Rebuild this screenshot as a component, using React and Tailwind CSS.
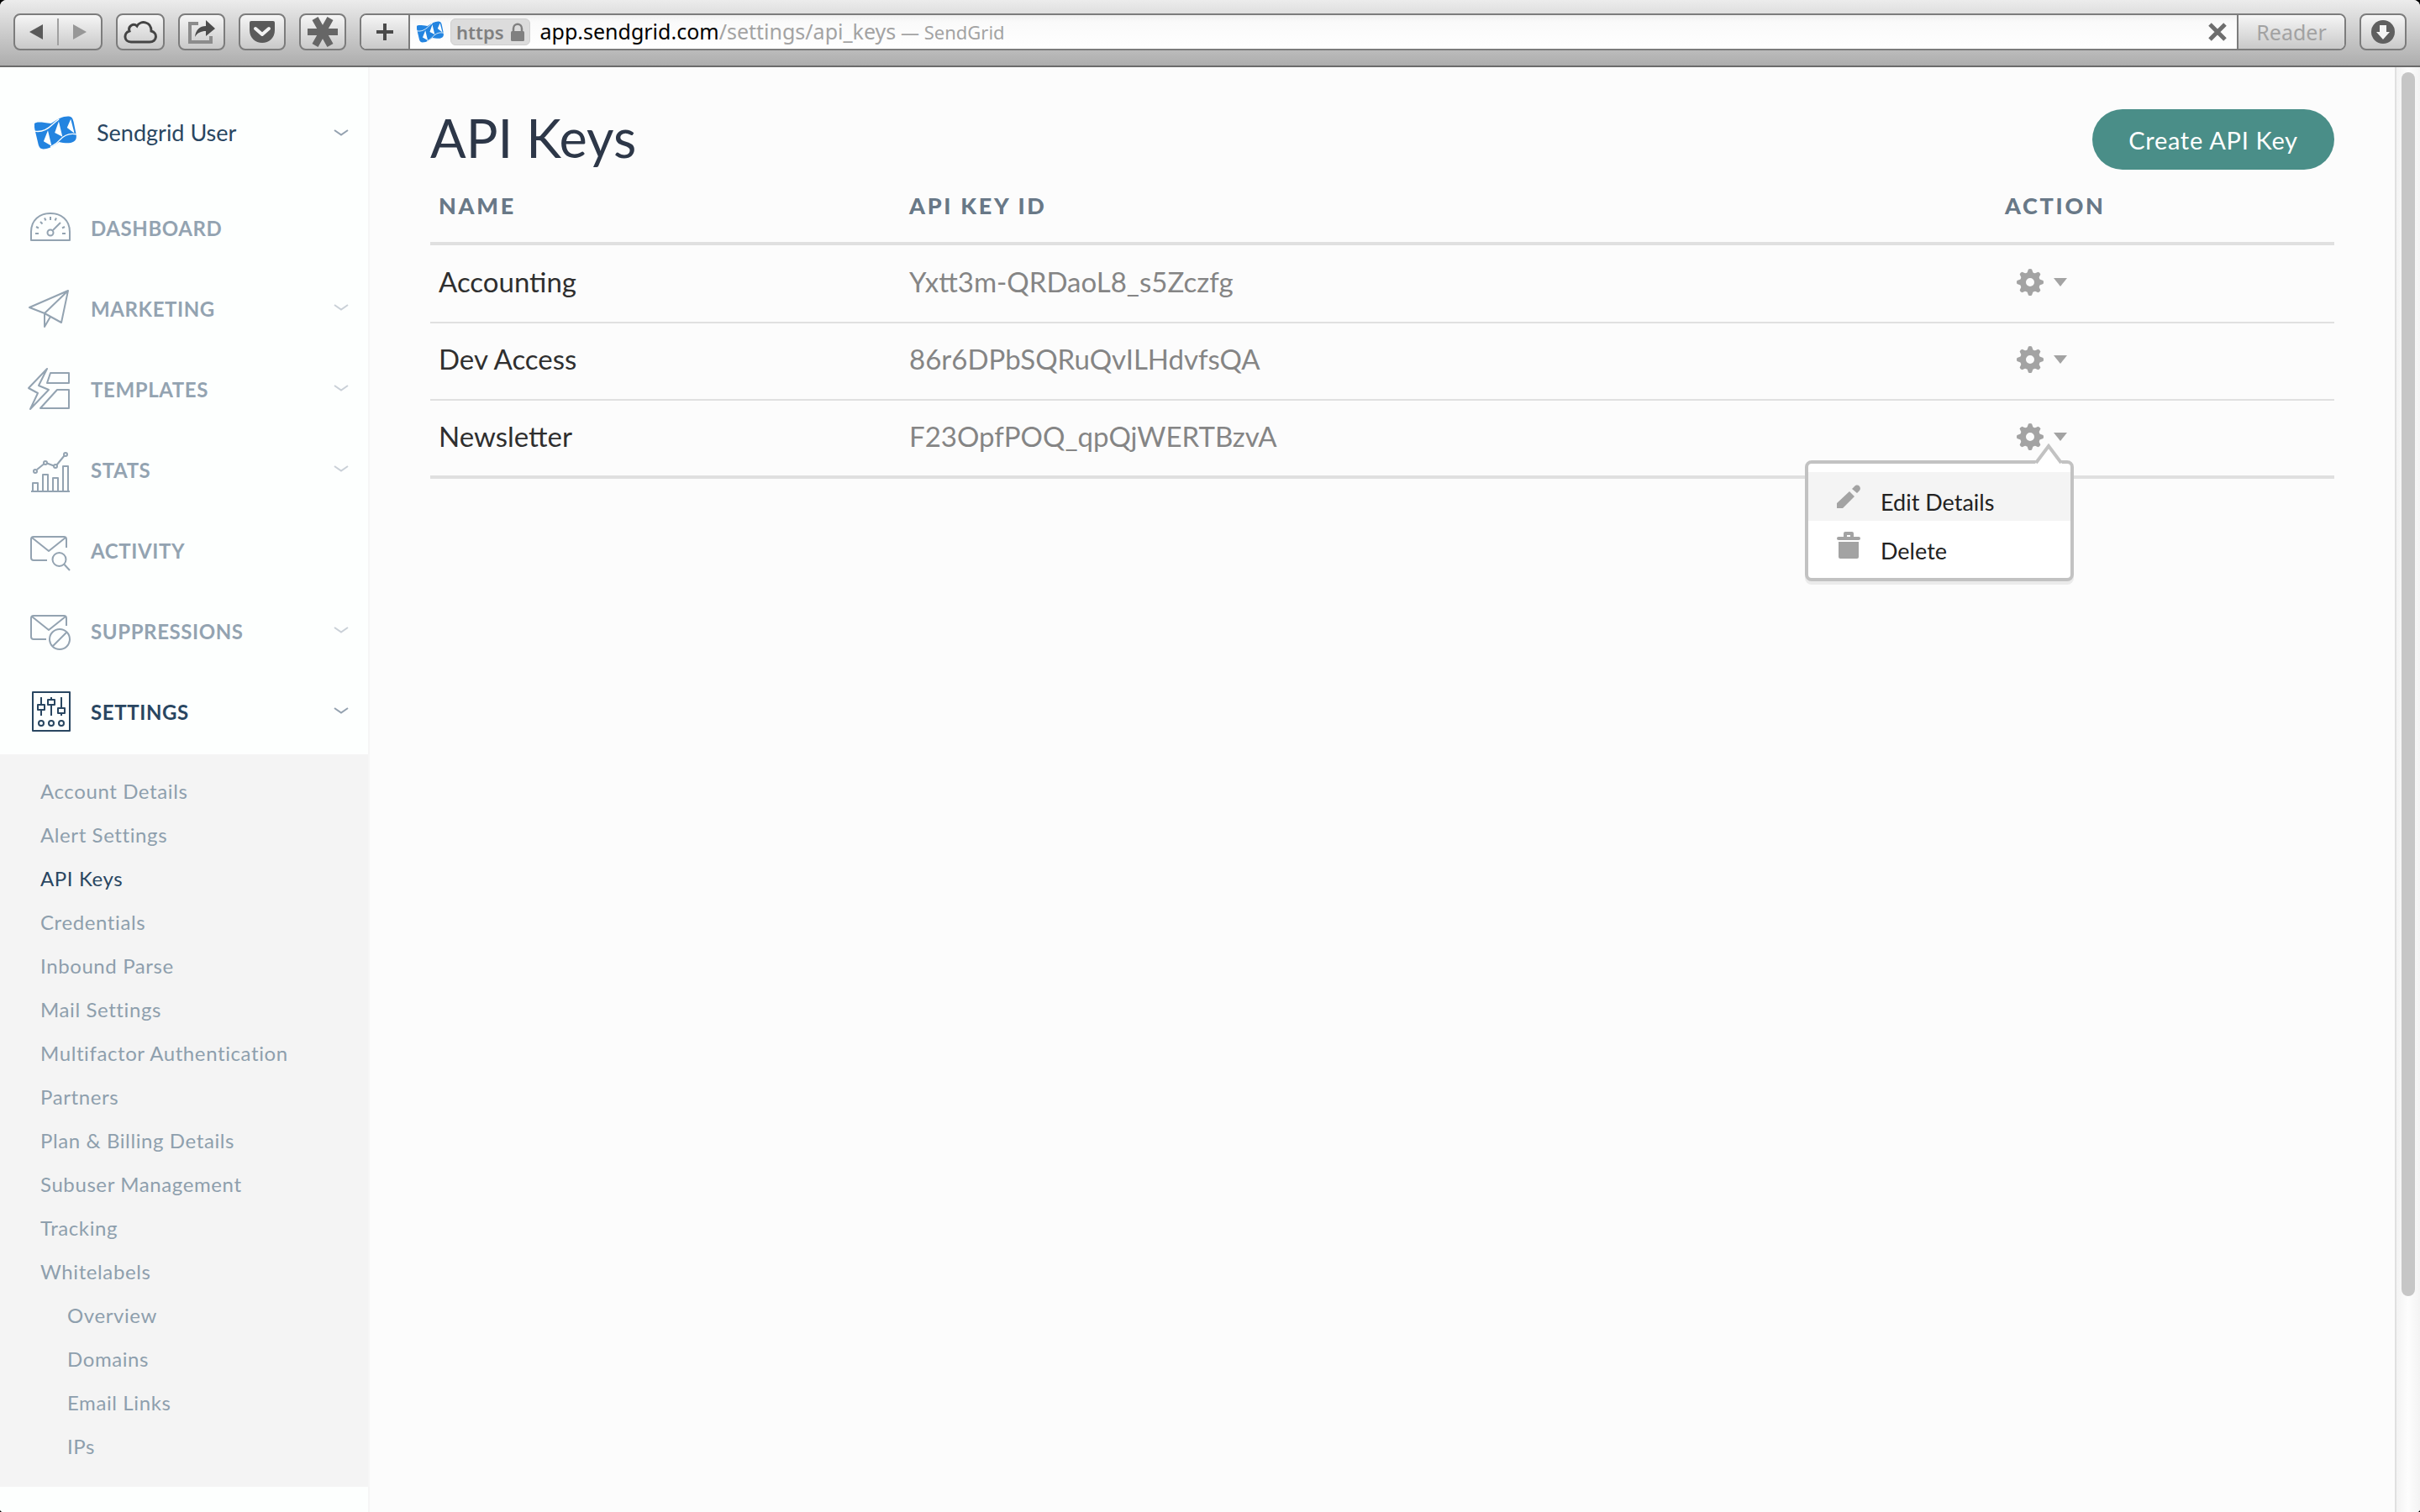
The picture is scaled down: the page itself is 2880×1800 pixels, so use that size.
import React from "react";

const TOOL_BTN =
  "flex h-11 items-center justify-center rounded-lg border-2 border-[#7c7c7c] bg-linear-to-b from-[#f6f6f6] to-[#c9c9c9]";

function Logo({ className }) {
  return (
    <svg viewBox="0 0 147 116" className={className} aria-hidden="true">
      <path
        d="M0 26 C4 20 22 19 58 26 C82 10 100 0 120 1 C132 2 134 10 137 20 L146 64 C148 78 146 92 120 94 C104 94 94 92 86 90 C66 104 52 115 30 115 C18 114 15 106 12 92 L2 50 C0 42 -1 34 0 26 Z"
        fill="#2384e0"
      />
      <path d="M-2 52 C26 58 46 46 62 30 C72 22 78 16 86 10" fill="none" stroke="#fdfffe" strokeWidth="4" />
      <path d="M149 64 C124 58 104 66 88 84 C78 96 66 102 56 108" fill="none" stroke="#fdfffe" strokeWidth="4" />
      <path d="M47 50 L60 104 L32 88 Z M85 18 L98 72 L71 58 Z M127 10 L140 60 L114 40 Z" fill="#fdfffe" />
    </svg>
  );
}

function Chevron({ strong }) {
  return (
    <svg viewBox="0 0 18 10" className={"h-[10px] w-[18px] " + (strong ? "text-[#93a1af]" : "text-[#c9d0d7]")} fill="none" stroke="currentColor" strokeWidth="2" aria-hidden="true">
      <path d="M1 2 L9 7.500 L17 2" />
    </svg>
  );
}

function NavIcon({ children }) {
  return (
    <svg viewBox="0 0 56 56" className="h-14 w-14 shrink-0" fill="none" stroke="currentColor" strokeWidth="2" strokeLinejoin="round" aria-hidden="true">
      {children}
    </svg>
  );
}

const ICONS = {
  dashboard: (
    <>
      <path d="M5 42 V32 C5 18 15 10 28 10 C41 10 51 18 51 32 V42 Z" />
      <circle cx="28" cy="33" r="3.5" />
      <path d="M31 30 L40 21 M10 34 H14 M42 34 H46 M11 26 L14 27.500 M16 20 L18.500 22.500 M21 15.500 L22.500 18.500 M28 14 V18 M35 15.500 L33.500 18.500 M45 26 L42 27.500" />
    </>
  ),
  marketing: (
    <path d="M3 26 L49 6 L41 44 L21 33 Z M49 6 L21 33 V49 L28 37" />
  ),
  templates: (
    <>
      <path d="M24 3 L2 26 L13 32 L4 51 L26 28 L14 23 Z" />
      <path d="M28 8 H50 V20 H24 Z M36 28 H50 V50 H16 Z" />
    </>
  ),
  stats: (
    <>
      <path d="M5 53 H51 M7 53 V43 H13 V53 M19 53 V33 H25 V53 M31 53 V37 H37 V53 M43 53 V23 H49 V53" />
      <circle cx="10" cy="29" r="2" />
      <circle cx="22" cy="19" r="2" />
      <circle cx="34" cy="23" r="2" />
      <circle cx="46" cy="9" r="2" />
      <path d="M12 27 L20 20.500 M24 19.500 L32 22.500 M35.500 21.500 L44.500 10.500" />
    </>
  ),
  activity: (
    <>
      <path d="M24 39 H8 Q5 39 5 36 V14 Q5 11 8 11 H44 Q47 11 47 14 V24 M6 12 L26 28 L46 12" />
      <circle cx="38.500" cy="38" r="8" />
      <path d="M44.500 44 L51 51" />
    </>
  ),
  suppressions: (
    <>
      <path d="M23 37 H8 Q5 37 5 34 V12 Q5 9 8 9 H44 Q47 9 47 12 V21 M6 10 L26 26 L46 10" />
      <circle cx="39" cy="37" r="12" />
      <path d="M31 45 L47 29" />
    </>
  ),
  settings: (
    <>
      <path d="M7 4 H51 V50 H7 Z M17 10 V19 M17 25 V32 M29 10 V13 M29 19 V32 M41 10 V23 M41 29 V32 M13 19 H21 V25 H13 Z M25 13 H33 V19 H25 Z M37 23 H45 V29 H37 Z" />
      <circle cx="17" cy="41" r="3" />
      <circle cx="29" cy="41" r="3" />
      <circle cx="41" cy="41" r="3" />
    </>
  ),
};

const NAV = [
  { id: "dashboard", label: "DASHBOARD" },
  { id: "marketing", label: "MARKETING", menu: true },
  { id: "templates", label: "TEMPLATES", menu: true },
  { id: "stats", label: "STATS", menu: true },
  { id: "activity", label: "ACTIVITY" },
  { id: "suppressions", label: "SUPPRESSIONS", menu: true },
  { id: "settings", label: "SETTINGS", menu: true, active: true },
];

const SUBNAV = [
  "Account Details",
  "Alert Settings",
  "API Keys",
  "Credentials",
  "Inbound Parse",
  "Mail Settings",
  "Multifactor Authentication",
  "Partners",
  "Plan & Billing Details",
  "Subuser Management",
  "Tracking",
  "Whitelabels",
];

const WHITELABELS = ["Overview", "Domains", "Email Links", "IPs"];

const KEYS = [
  { name: "Accounting", id: "Yxtt3m-QRDaoL8_s5Zczfg" },
  { name: "Dev Access", id: "86r6DPbSQRuQvILHdvfsQA" },
  { name: "Newsletter", id: "F23OpfPOQ_qpQjWERTBzvA", open: true },
];

function Toolbar() {
  return (
    <header className="flex h-20 shrink-0 items-start border-b-2 border-[#6b6b6b] bg-linear-to-b from-[#ececec] to-[#adadad] px-4 pt-4 font-['Noto_Sans',sans-serif]">
      <div className={TOOL_BTN + " w-[106px]"}>
        <button type="button" aria-label="Back" className="flex h-full flex-1 items-center justify-center">
          <svg viewBox="0 0 18 18" className="h-[18px] w-[18px]"><path d="M17 0 V18 L1 9 Z" fill="#5a5a5a" /></svg>
        </button>
        <span className="h-8 w-0.5 bg-[#a0a0a0]" />
        <button type="button" aria-label="Forward" className="flex h-full flex-1 items-center justify-center">
          <svg viewBox="0 0 18 18" className="h-[18px] w-[18px]"><path d="M1 0 V18 L17 9 Z" fill="#979797" /></svg>
        </button>
      </div>
      <button type="button" aria-label="iCloud tabs" className={TOOL_BTN + " ml-4 w-[58px]"}>
        <svg viewBox="0 0 40 28" className="h-7 w-10" fill="none" stroke="#444" strokeWidth="3">
          <path d="M9 26 C0 26 0 15 7 13 C5 7 12 3 16 7 C20 0 33 1 33 13 C41 15 40 26 31 26 Z" />
        </svg>
      </button>
      <button type="button" aria-label="Share" className={TOOL_BTN + " ml-4 w-14"}>
        <svg viewBox="0 0 34 32" className="h-8 w-[34px]">
          <path d="M13 6 H3 V28 H28 V21" fill="none" stroke="#8c8c8c" strokeWidth="4" />
          <path d="M9 22 C10 13 15 9 22 9 V2 L33 12 L22 21 V15 C16 15 12 17 9 22 Z" fill="#4c4c4c" />
        </svg>
      </button>
      <button type="button" aria-label="Save to Pocket" className={TOOL_BTN + " ml-4 w-14"}>
        <svg viewBox="0 0 30 26" className="h-[26px] w-[30px]">
          <path d="M2 0 H28 Q30 0 30 2 V11 C30 20 23 26 15 26 C7 26 0 20 0 11 V2 Q0 0 2 0 Z" fill="#5a5a5a" />
          <path d="M7 9 L15 16 L23 9" fill="none" stroke="#f2f2f2" strokeWidth="4" strokeLinecap="round" strokeLinejoin="round" />
        </svg>
      </button>
      <button type="button" aria-label="LastPass" className={TOOL_BTN + " ml-4 w-14"}>
        <svg viewBox="0 0 36 36" className="h-9 w-9" stroke="#666" strokeWidth="8">
          <path d="M0 18 H36 M9 2 L27 34 M27 2 L9 34" />
        </svg>
      </button>
      <div className="ml-4 flex h-11 min-w-0 flex-1 overflow-hidden rounded-lg border-2 border-[#7c7c7c] bg-white">
        <button type="button" aria-label="New bookmark" className="flex w-[58px] items-center justify-center border-r-2 border-[#7c7c7c] bg-linear-to-b from-[#f6f6f6] to-[#c9c9c9]">
          <svg viewBox="0 0 20 20" className="h-5 w-5" stroke="#4a4a4a" strokeWidth="4"><path d="M0 10 H20 M10 0 V20" /></svg>
        </button>
        <div className="flex min-w-0 flex-1 items-center bg-linear-to-b from-[#f0f0f0] via-[#fafafa] via-20% to-white pr-3 pl-2">
          <Logo className="h-7 w-8" />
          <span className="ml-2 flex h-8 items-center gap-2 rounded-md border border-[#cfcfcf] bg-[#dcdcdc] px-1.5 text-[22px] font-semibold text-[#808080]">
            https
            <svg viewBox="0 0 16 22" className="h-[22px] w-4">
              <path d="M3 11 V7 C3 0 13 0 13 7 V11" fill="none" stroke="#808080" strokeWidth="2.500" />
              <rect x="0" y="10" width="16" height="12" rx="1.500" fill="#808080" />
            </svg>
          </span>
          <p className="ml-3 truncate text-[25px] text-[#a3a3a3]">
            <span className="text-black">app.sendgrid.com</span>
            <span>/settings/api_keys</span>
            <span className="text-[22px]"> — SendGrid</span>
          </p>
          <button type="button" aria-label="Stop loading" className="ml-auto">
            <svg viewBox="0 0 22 22" className="h-[22px] w-[22px]" stroke="#6e6e6e" strokeWidth="5"><path d="M2 2 L20 20 M20 2 L2 20" /></svg>
          </button>
        </div>
        <button type="button" className="w-32 border-l-2 border-[#7c7c7c] bg-linear-to-b from-[#f6f6f6] to-[#c9c9c9] text-[25px] leading-10 text-[#a2a2a2]">
          Reader
        </button>
      </div>
      <button type="button" aria-label="Downloads" className={TOOL_BTN + " ml-4 w-14"}>
        <svg viewBox="0 0 28 28" className="h-7 w-7">
          <circle cx="14" cy="14" r="14" fill="#5f5f5f" />
          <path d="M10 6 H18 V14 H22 L14 23 L6 14 H10 Z" fill="#f4f4f4" />
        </svg>
      </button>
    </header>
  );
}

function Sidebar() {
  return (
    <nav className="w-110 shrink-0 border-r-2 border-[#f6f6f6] bg-[#fdfffe]">
      <button type="button" className="mt-[30px] flex h-24 w-full items-center pr-[23px] pl-[41px] text-[27px] text-[#294661]">
        <Logo className="h-10 w-[50px]" />
        <span className="ml-6">Sendgrid User</span>
        <span className="ml-auto"><Chevron strong /></span>
      </button>
      <ul className="mt-[18px] pb-0.5">
        {NAV.map((item) => (
          <li key={item.id}>
            <a
              href={"#" + item.id}
              className={"flex h-24 items-center pr-[23px] pl-8 text-[24px] font-bold tracking-wide " + (item.active ? "text-[#294661]" : "text-[#93a3b1]")}
            >
              <NavIcon>{ICONS[item.id]}</NavIcon>
              <span className="ml-5">{item.label}</span>
              {item.menu && <span className="ml-auto pb-1"><Chevron strong={item.active} /></span>}
            </a>
          </li>
        ))}
      </ul>
      <ul className="bg-[#f4f4f4] pt-[18px] pb-[22px] pl-12 text-[24px] leading-[52px] tracking-wide text-[#8e9fad]">
        {SUBNAV.map((label) => (
          <li key={label}>
            <a href="#settings" className={label === "API Keys" ? "text-[#294661]" : ""}>{label}</a>
            {label === "Whitelabels" && (
              <ul className="pl-8">
                {WHITELABELS.map((sub) => (
                  <li key={sub}><a href="#whitelabels">{sub}</a></li>
                ))}
              </ul>
            )}
          </li>
        ))}
      </ul>
    </nav>
  );
}

const TEETH = [0, 45, 90, 135, 180, 225, 270, 315];

function Gear() {
  return (
    <svg viewBox="0 0 32 32" className="h-8 w-8" aria-hidden="true">
      <g fill="#a3a3a3">
        {TEETH.map((a) => (
          <path key={a} d="M12 6 L14 0.500 Q16 -0.500 18 0.500 L20 6 Z" transform={`rotate(${a} 16 16)`} />
        ))}
      </g>
      <circle cx="16" cy="16" r="8.500" fill="none" stroke="#a3a3a3" strokeWidth="7" />
    </svg>
  );
}

function ActionMenu() {
  return (
    <div role="menu" className="absolute top-full right-0 z-10 mt-3 w-80 rounded-lg border-4 border-[#c2c2c2] bg-white py-2.5 text-[27px] text-[#222] shadow-[0_4px_0_#ebebeb]">
      <svg viewBox="0 0 32 24" className="absolute -top-6 right-2.5 h-6 w-8" aria-hidden="true">
        <path d="M0 24 L16 3 L32 24 Z" fill="#fff" />
        <path d="M1 23 L16 3 L31 23" fill="none" stroke="#c2c2c2" strokeWidth="4" />
      </svg>
      <button type="button" role="menuitem" className="flex h-[58px] w-full items-center bg-[#f4f4f4] pt-4 pl-[34px]">
        <svg viewBox="0 0 28 28" className="mb-4 h-7 w-7" fill="#a3a3a3" aria-hidden="true">
          <path d="M0 28 V22 L15 8 L21 14 L7 28 Z M18 5 L21 2 C25 -2 30 3 27 7 L24 10 Z" />
        </svg>
        <span className="ml-6">Edit Details</span>
      </button>
      <button type="button" role="menuitem" className="flex h-[58px] w-full items-center pt-4 pl-[34px]">
        <svg viewBox="0 0 28 32" className="mb-4 h-8 w-7" fill="#a3a3a3" aria-hidden="true">
          <path d="M2 12 H26 V30 Q26 32 24 32 H4 Q2 32 2 30 Z" />
          <rect x="0" y="6" width="28" height="4" rx="2" />
          <path d="M10 8 V2 H18 V8" fill="none" stroke="#a3a3a3" strokeWidth="4" strokeLinejoin="round" />
        </svg>
        <span className="ml-6">Delete</span>
      </button>
    </div>
  );
}

function Main() {
  return (
    <main className="min-w-0 flex-1 bg-[#fcfcfc] px-18 pt-[50px]">
      <div className="flex h-[72px] items-center justify-between">
        <h1 className="pb-1 text-[63px] leading-[72px] text-[#2d3748]">API Keys</h1>
        <button type="button" className="h-[72px] w-72 rounded-full bg-[#4a8e88] pt-0.5 text-[29px] tracking-wide text-white">
          Create API Key
        </button>
      </div>
      <table className="w-full table-fixed border-b-4 border-[#e0e0e0] text-left">
        <thead>
          <tr className="h-[88px] border-b-4 border-[#e0e0e0] text-[27px] tracking-widest text-[#687887]">
            <th scope="col" className="w-[560px] px-2.5 font-black">NAME</th>
            <th scope="col" className="px-2.5 font-black">API KEY ID</th>
            <th scope="col" className="w-[402px] px-2.5 font-black">ACTION</th>
          </tr>
        </thead>
        <tbody>
          {KEYS.map((key) => (
            <tr key={key.id} className="h-[92px] border-t-2 border-[#e0e0e0] text-[33px] first:h-[94px] first:border-t-0">
              <td className="px-2.5 pb-1 text-[#2f2f2f]">{key.name}</td>
              <td className="px-2.5 pb-1 text-[#858585]">{key.id}</td>
              <td className="px-2.5 pb-1">
                <div className="relative w-[82px]">
                  <button type="button" aria-label={"Actions for " + key.name} className="flex items-center gap-3 pl-3.5">
                    <Gear />
                    <svg viewBox="0 0 16 10" className="h-2.5 w-4" aria-hidden="true"><path d="M0 0 H16 L8 10 Z" fill="#a3a3a3" /></svg>
                  </button>
                  {key.open && <ActionMenu />}
                </div>
              </td>
            </tr>
          ))}
        </tbody>
      </table>
    </main>
  );
}

export default function App() {
  return (
    <div className="h-screen bg-black">
      <div className="flex h-full flex-col overflow-hidden rounded-t-lg rounded-b bg-[#fcfcfc] font-['Lato',sans-serif]">
        <Toolbar />
        <div className="flex min-h-0 flex-1">
          <Sidebar />
          <Main />
          <div className="w-[30px] shrink-0 border-l-2 border-[#e0e0e0] bg-linear-to-r from-[#f3f3f3] via-[#fdfdfd] to-[#f3f3f3] px-1.5 pt-1.5">
            <div className="h-[85%] w-4 rounded-full bg-[#c6c6c6]" />
          </div>
        </div>
      </div>
    </div>
  );
}
